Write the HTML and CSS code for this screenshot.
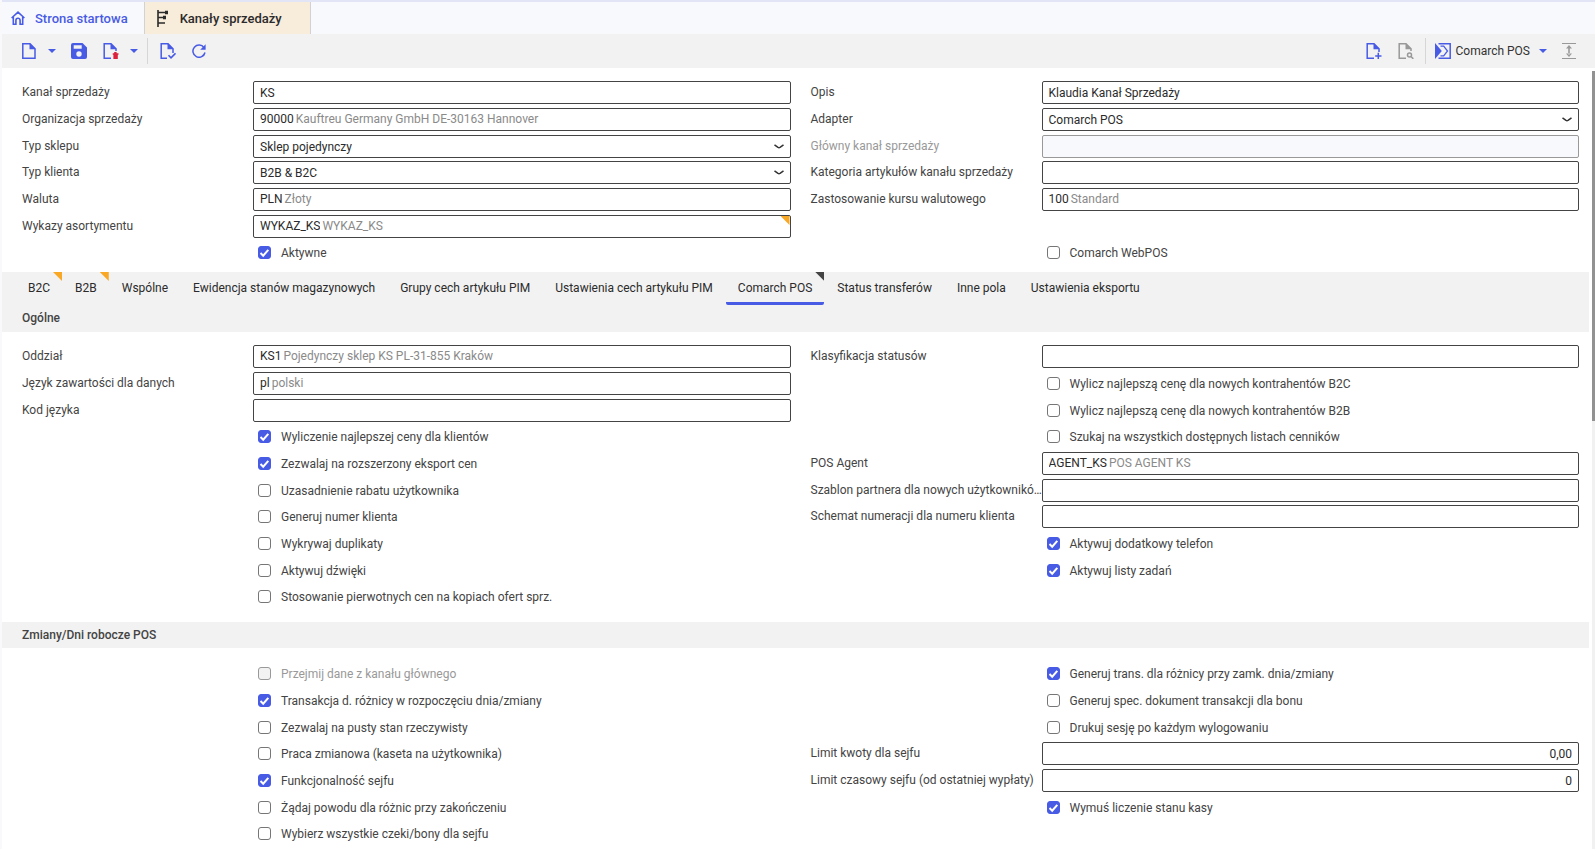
FILE: index.html
```
<!DOCTYPE html>
<html lang="pl">
<head>
  <meta charset="UTF-8" />
  <meta name="viewport" content="width=device-width, initial-scale=1.0"/>
  <title>Kanały sprzedaży</title>
  <link rel="stylesheet" href="styles.css">
</head>
<body>

<nav class="app-tabs">
  <a class="app-tab" href="#">
    <svg width="14" height="14" viewBox="0 0 14 14" fill="none" stroke="currentColor" stroke-width="1.6"><path d="M.6 7 7 1.2 13.4 7M2.3 6v7.2h2.6V9.4a2.1 2.1 0 0 1 4.2 0v3.8h2.6V6"/></svg>
    Strona startowa
  </a>
  <a class="app-tab active" href="#">
    <svg width="14" height="17" viewBox="0 0 14 17" fill="none" stroke="currentColor" stroke-width="1.6"><path d="M2 0v17M2 2.500h9M2 7.500h6M2 13h7"/><path d="M9 .7h3v3.600H9zM7 5.700h3v3.600H7z" fill="currentColor" stroke="none"/></svg>
    Kanały sprzedaży
  </a>
</nav>

<header class="toolbar">
  <button class="tool" aria-label="Nowy"><svg width="16" height="16" viewBox="0 0 16 16"><path d="M1.800.8H9l5 5v9.400H1.800z" fill="none" stroke="currentColor" stroke-width="1.500"/><path d="M8.500 0v6.200h6.200z" fill="currentColor"/></svg></button>
  <button class="tool caret" aria-label="Więcej opcji nowy"><svg width="8" height="4" viewBox="0 0 8 4"><path d="M0 0h8L4 4z" fill="currentColor"/></svg></button>
  <button class="tool" aria-label="Zapisz"><svg width="16" height="16" viewBox="0 0 16 16"><path fill="currentColor" fill-rule="evenodd" d="M2 0h9.5L16 4.5V14a2 2 0 0 1-2 2H2a2 2 0 0 1-2-2V2a2 2 0 0 1 2-2zm.7 2.3v3.4h8V2.3zM8 8.3a2.7 2.7 0 1 0 0 5.4 2.7 2.7 0 0 0 0-5.4z"/></svg></button>
  <button class="tool" aria-label="Usuń"><svg width="16" height="16" viewBox="0 0 16 16"><path d="M8 15.2H1.2V.8H8l5 5V8" fill="none" stroke="currentColor" stroke-width="1.5"/><path d="M7.5 0v6.200h6.200z" fill="currentColor"/><path class="trash" d="M9.700 10.200h1.500V9h2.400v1.200h1.900v1.600h-.7V16h-4.400v-4.200h-.7z"/></svg></button>
  <button class="tool caret" aria-label="Więcej opcji usuń"><svg width="8" height="4" viewBox="0 0 8 4"><path d="M0 0h8L4 4z" fill="currentColor"/></svg></button>
  <span class="divider"></span>
  <button class="tool" aria-label="Sprawdź"><svg width="16" height="16" viewBox="0 0 16 16"><path d="M7 15.200H1.200V.8H8l5 5V10" fill="none" stroke="currentColor" stroke-width="1.500"/><path d="M7.500 0v6.200h6.200z" fill="currentColor"/><path d="m8.500 12.300 2.500 2.500 4.500-4.500" fill="none" stroke="currentColor" stroke-width="1.600"/></svg></button>
  <button class="tool" aria-label="Odśwież"><svg width="14" height="14" viewBox="0 0 14 14"><path d="M12 3.600A6.100 6.100 0 1 0 13 8.500" fill="none" stroke="currentColor" stroke-width="1.500"/><path d="M13.600.3v5.500H8.200z" fill="currentColor"/></svg></button>
  <span class="spacer"></span>
  <button class="tool" aria-label="Dodaj"><svg width="16" height="16" viewBox="0 0 16 16"><path d="M8 15.200H1.200V.8H8l5 5V9" fill="none" stroke="currentColor" stroke-width="1.500"/><path d="M7.500 0v6.200h6.200z" fill="currentColor"/><path d="M12.300 9.800V16M9.200 13h6.300" stroke="currentColor" stroke-width="1.500"/></svg></button>
  <button class="tool off" aria-label="Podgląd" disabled><svg width="16" height="16" viewBox="0 0 16 16"><path d="M8 15.200H1.200V.8H8l5 5V8" fill="none" stroke="currentColor" stroke-width="1.500"/><path d="M7.500 0v6.200h6.200z" fill="currentColor"/><circle cx="11.500" cy="12" r="2" fill="none" stroke="currentColor" stroke-width="1.500"/><path d="m13 13.500 2.300 2.300" stroke="currentColor" stroke-width="1.600"/></svg></button>
  <span class="divider"></span>
  <button class="tool pos"><svg width="16" height="16" viewBox="0 0 16 16"><path d="M3.500.8h11.700v14.400H3.500" fill="none" stroke="currentColor" stroke-width="1.500"/><path d="M0 0 6.800 8 0 16z" fill="currentColor"/><path d="M5.500 3.200h3.200L12.500 8l-3.800 4.800H5.500" fill="none" stroke="currentColor" stroke-width="1.300"/></svg><span>Comarch POS</span><svg width="8" height="4" viewBox="0 0 8 4"><path d="M0 0h8L4 4z" fill="currentColor"/></svg></button>
  <button class="tool off" aria-label="Zwiń"><svg width="16" height="16" viewBox="0 0 16 16"><path d="M1 .5h14M1 15.500h14" stroke="currentColor"/><path d="M7.200 4.500h1.600v7H7.200z M8 2l3 3.500H5zM8 14l3-3.500H5z" fill="currentColor"/></svg></button>
</header>

<div class="workspace">
<main class="content">

  <section class="form top-form">
    <div class="column">
      <div class="row"><label for="channel">Kanał sprzedaży</label><input class="field" id="channel" value="KS"></div>
      <div class="row"><label for="org">Organizacja sprzedaży</label><div class="field ref"><input id="org" value="90000"><span>Kauftreu Germany GmbH DE-30163 Hannover</span></div></div>
      <div class="row"><label for="shop">Typ sklepu</label><select class="field" id="shop"><option>Sklep pojedynczy</option></select></div>
      <div class="row"><label for="client">Typ klienta</label><select class="field" id="client"><option>B2B &amp; B2C</option></select></div>
      <div class="row"><label for="currency">Waluta</label><div class="field ref"><input id="currency" value="PLN"><span>Złoty</span></div></div>
      <div class="row"><label for="lists">Wykazy asortymentu</label><div class="field ref marked"><input id="lists" value="WYKAZ_KS"><span>WYKAZ_KS</span></div></div>
      <div class="row"><label class="check"><input type="checkbox" checked>Aktywne</label></div>
    </div>
    <div class="column">
      <div class="row"><label for="desc">Opis</label><input class="field" id="desc" value="Klaudia Kanał Sprzedaży"></div>
      <div class="row"><label for="adapter">Adapter</label><select class="field" id="adapter"><option>Comarch POS</option></select></div>
      <div class="row disabled"><label for="main-channel">Główny kanał sprzedaży</label><input class="field" id="main-channel" disabled></div>
      <div class="row"><label for="category">Kategoria artykułów kanału sprzedaży</label><input class="field" id="category"></div>
      <div class="row"><label for="rate">Zastosowanie kursu walutowego</label><div class="field ref"><input id="rate" value="100"><span>Standard</span></div></div>
      <div class="row"></div>
      <div class="row"><label class="check"><input type="checkbox">Comarch WebPOS</label></div>
    </div>
  </section>

  <div class="tabs-area">
    <nav class="tabs">
      <button class="tab marked">B2C</button>
      <button class="tab marked">B2B</button>
      <button class="tab">Wspólne</button>
      <button class="tab">Ewidencja stanów magazynowych</button>
      <button class="tab">Grupy cech artykułu PIM</button>
      <button class="tab">Ustawienia cech artykułu PIM</button>
      <button class="tab marked selected">Comarch POS</button>
      <button class="tab">Status transferów</button>
      <button class="tab">Inne pola</button>
      <button class="tab">Ustawienia eksportu</button>
    </nav>
    <h2 class="section-title">Ogólne</h2>
  </div>

  <section class="form general-form">
    <div class="column">
      <div class="row"><label for="branch">Oddział</label><div class="field ref"><input id="branch" value="KS1"><span>Pojedynczy sklep KS PL-31-855 Kraków</span></div></div>
      <div class="row"><label for="lang">Język zawartości dla danych</label><div class="field ref"><input id="lang" value="pl"><span>polski</span></div></div>
      <div class="row"><label for="lang-code">Kod języka</label><input class="field" id="lang-code"></div>
      <div class="row"><label class="check"><input type="checkbox" checked>Wyliczenie najlepszej ceny dla klientów</label></div>
      <div class="row"><label class="check"><input type="checkbox" checked>Zezwalaj na rozszerzony eksport cen</label></div>
      <div class="row"><label class="check"><input type="checkbox">Uzasadnienie rabatu użytkownika</label></div>
      <div class="row"><label class="check"><input type="checkbox">Generuj numer klienta</label></div>
      <div class="row"><label class="check"><input type="checkbox">Wykrywaj duplikaty</label></div>
      <div class="row"><label class="check"><input type="checkbox">Aktywuj dźwięki</label></div>
      <div class="row"><label class="check"><input type="checkbox">Stosowanie pierwotnych cen na kopiach ofert sprz.</label></div>
    </div>
    <div class="column">
      <div class="row"><label for="status">Klasyfikacja statusów</label><input class="field" id="status"></div>
      <div class="row"><label class="check"><input type="checkbox">Wylicz najlepszą cenę dla nowych kontrahentów B2C</label></div>
      <div class="row"><label class="check"><input type="checkbox">Wylicz najlepszą cenę dla nowych kontrahentów B2B</label></div>
      <div class="row"><label class="check"><input type="checkbox">Szukaj na wszystkich dostępnych listach cenników</label></div>
      <div class="row"><label for="agent">POS Agent</label><div class="field ref"><input id="agent" value="AGENT_KS"><span>POS AGENT KS</span></div></div>
      <div class="row"><label for="template">Szablon partnera dla nowych użytkownikó…</label><input class="field" id="template"></div>
      <div class="row"><label for="numbering">Schemat numeracji dla numeru klienta</label><input class="field" id="numbering"></div>
      <div class="row"><label class="check"><input type="checkbox" checked>Aktywuj dodatkowy telefon</label></div>
      <div class="row"><label class="check"><input type="checkbox" checked>Aktywuj listy zadań</label></div>
    </div>
  </section>

  <h2 class="section-title">Zmiany/Dni robocze POS</h2>

  <section class="form shift-form">
    <div class="column">
      <div class="row disabled"><label class="check"><input type="checkbox" disabled>Przejmij dane z kanału głównego</label></div>
      <div class="row"><label class="check"><input type="checkbox" checked>Transakcja d. różnicy w rozpoczęciu dnia/zmiany</label></div>
      <div class="row"><label class="check"><input type="checkbox">Zezwalaj na pusty stan rzeczywisty</label></div>
      <div class="row"><label class="check"><input type="checkbox">Praca zmianowa (kaseta na użytkownika)</label></div>
      <div class="row"><label class="check"><input type="checkbox" checked>Funkcjonalność sejfu</label></div>
      <div class="row"><label class="check"><input type="checkbox">Żądaj powodu dla różnic przy zakończeniu</label></div>
      <div class="row"><label class="check"><input type="checkbox">Wybierz wszystkie czeki/bony dla sejfu</label></div>
    </div>
    <div class="column">
      <div class="row"><label class="check"><input type="checkbox" checked>Generuj trans. dla różnicy przy zamk. dnia/zmiany</label></div>
      <div class="row"><label class="check"><input type="checkbox">Generuj spec. dokument transakcji dla bonu</label></div>
      <div class="row"><label class="check"><input type="checkbox">Drukuj sesję po każdym wylogowaniu</label></div>
      <div class="row"><label for="limit">Limit kwoty dla sejfu</label><input class="field number" id="limit" value="0,00"></div>
      <div class="row"><label for="time-limit">Limit czasowy sejfu (od ostatniej wypłaty)</label><input class="field number" id="time-limit" value="0"></div>
      <div class="row"><label class="check"><input type="checkbox" checked>Wymuś liczenie stanu kasy</label></div>
    </div>
  </section>

</main>
<div class="scrollbar"><div class="thumb"></div></div>
</div>

</body>
</html>
```
FILE: styles.css
```
* {
  box-sizing: border-box;
}
body {
  margin: 0;
  height: 100vh;
  display: flex;
  flex-direction: column;
  overflow: hidden;
  font-family: Roboto, sans-serif;
  font-size: 12px;
  color: #444;
  background: #fff;
  border-left: 2px solid #f9f9fb;
}
button, input, select {
  font: inherit;
  color: #2b2b2b;
  margin: 0;
}
button {
  border: none;
  background: none;
  padding: 0;
  cursor: pointer;
}

/* open windows */
.app-tabs {
  display: flex;
  height: 34px;
  flex: none;
  background: #f8f9fc;
  border-top: 2px solid #e1e5f6;
}
.app-tab {
  display: flex;
  align-items: center;
  gap: 10px;
  padding: 0 16px 0 9px;
  font-size: 13px;
  font-weight: 500;
  color: #485be5;
  text-decoration: none;
  border-right: 1px solid #d2d2d6;
}
.app-tab.active {
  padding: 0 28px 0 11px;
  color: #2b2b2b;
  background: #f8ecdb;
}

.toolbar {
  display: flex;
  align-items: center;
  flex: none;
  height: 34px;
  padding: 0 18px 0 19px;
  background: #f2f2f2;
}
.tool {
  display: flex;
  align-items: center;
  color: #485be5;
  margin-right: 16px;
}
.tool:last-child {
  margin-right: 0;
}
.tool:has(+ .caret) {
  margin-right: 11px;
}
.tool.caret {
  margin-right: 15px;
}
.tool.caret:has(+ .divider) {
  margin-right: 9px;
}
.tool.off {
  color: #999;
}
.tool.off:has(+ .divider) {
  margin-right: 11px;
}
.trash {
  fill: #dc1f3c;
}
.divider {
  width: 1px;
  height: 26px;
  margin-right: 12px;
  background: #d6d6d6;
}
.divider:has(+ .pos) {
  margin-right: 9px;
}
.spacer {
  flex: 1;
}
.pos span {
  margin: 0 9px 0 5px;
  color: #333;
}
.tool.pos {
  margin-right: 14px;
}

.workspace {
  display: flex;
  flex: 1;
  min-height: 0;
}
.content {
  flex: 1;
  overflow: hidden;
}
.scrollbar {
  width: 3px;
  margin: 3px 0 0 3px;
  background: #f1f1f1;
}
.thumb {
  height: 45%;
  background: #929292;
}

/* forms */
.form {
  display: grid;
  grid-template-columns: 1fr 1fr;
  gap: 20px;
  padding: 11px 10px 6px 20px;
}
.general-form {
  padding-bottom: 12px;
}
.shift-form {
  padding-top: 12px;
}
.column {
  display: grid;
  grid-auto-rows: 27px 27px 26px;
  align-content: start;
}
.row {
  display: grid;
  grid-template-columns: 231px 1fr;
  padding-top: 2px;
}
.row label {
  height: 23px;
  line-height: 22px;
  white-space: nowrap;
}
.row.disabled label {
  color: #999;
}
.field {
  width: 100%;
  height: 23px;
  padding: 0 6px;
  line-height: 20px;
  background: #fff;
  border: 1px solid #444;
  border-radius: 2px;
}
.field:disabled {
  background: #f8f9fc;
  border-color: #999;
}
select.field {
  appearance: none;
  background: #fff url("data:image/svg+xml,%3Csvg xmlns='http://www.w3.org/2000/svg' width='10' height='5' fill='none' stroke='%23333' stroke-width='1.5'%3E%3Cpath d='M.5.8 4 3.400Q5 4 6 3.400L9.500.8'/%3E%3C/svg%3E") no-repeat right 6px center;
}
.field.number {
  text-align: right;
}
.ref {
  position: relative;
  display: flex;
  gap: 2px;
  color: #8a8a8a;
}
.ref input {
  field-sizing: content;
  height: 20px;
  padding: 0;
  border: none;
  background: none;
}
.row .check {
  grid-column: 2;
  display: flex;
  align-items: center;
  gap: 10px;
  padding-left: 5px;
}
.check input {
  appearance: none;
  width: 13px;
  height: 13px;
  flex: none;
  background: #fff;
  border: 1px solid #767676;
  border-radius: 3px;
}
.check input:checked {
  border-color: #485be5;
  background: #485be5 url("data:image/svg+xml,%3Csvg xmlns='http://www.w3.org/2000/svg' width='11' height='11' fill='none' stroke='white' stroke-width='2'%3E%3Cpath d='M1.500 6l2.700 2.700L9.300 2.800'/%3E%3C/svg%3E") no-repeat center;
}
.check input:disabled {
  background: #f2f2f2;
  border-color: #999;
}

/* corner flag for changed values */
.marked {
  position: relative;
}
.marked::after {
  content: "";
  position: absolute;
  top: 0;
  right: 0;
  width: 9px;
  height: 9px;
  background: #f9a825;
  clip-path: polygon(0 0, 100% 0, 100% 100%);
}
.marked.selected::after {
  background: #444;
}

.tabs-area {
  padding-bottom: 1px;
  background: #f2f2f2;
}
.tabs {
  display: flex;
  gap: 1px;
  padding-left: 14px;
}
.tab {
  height: 33px;
  padding: 2px 12px 0;
  border-bottom: 3px solid transparent;
  white-space: nowrap;
}
.tab.selected {
  border-bottom-color: #485be5;
  border-radius: 0 0 2px 2px;
}
.section-title {
  margin: 0;
  padding-left: 20px;
  font-size: 12px;
  font-weight: 500;
  line-height: 26px;
  background: #f2f2f2;
}
```
